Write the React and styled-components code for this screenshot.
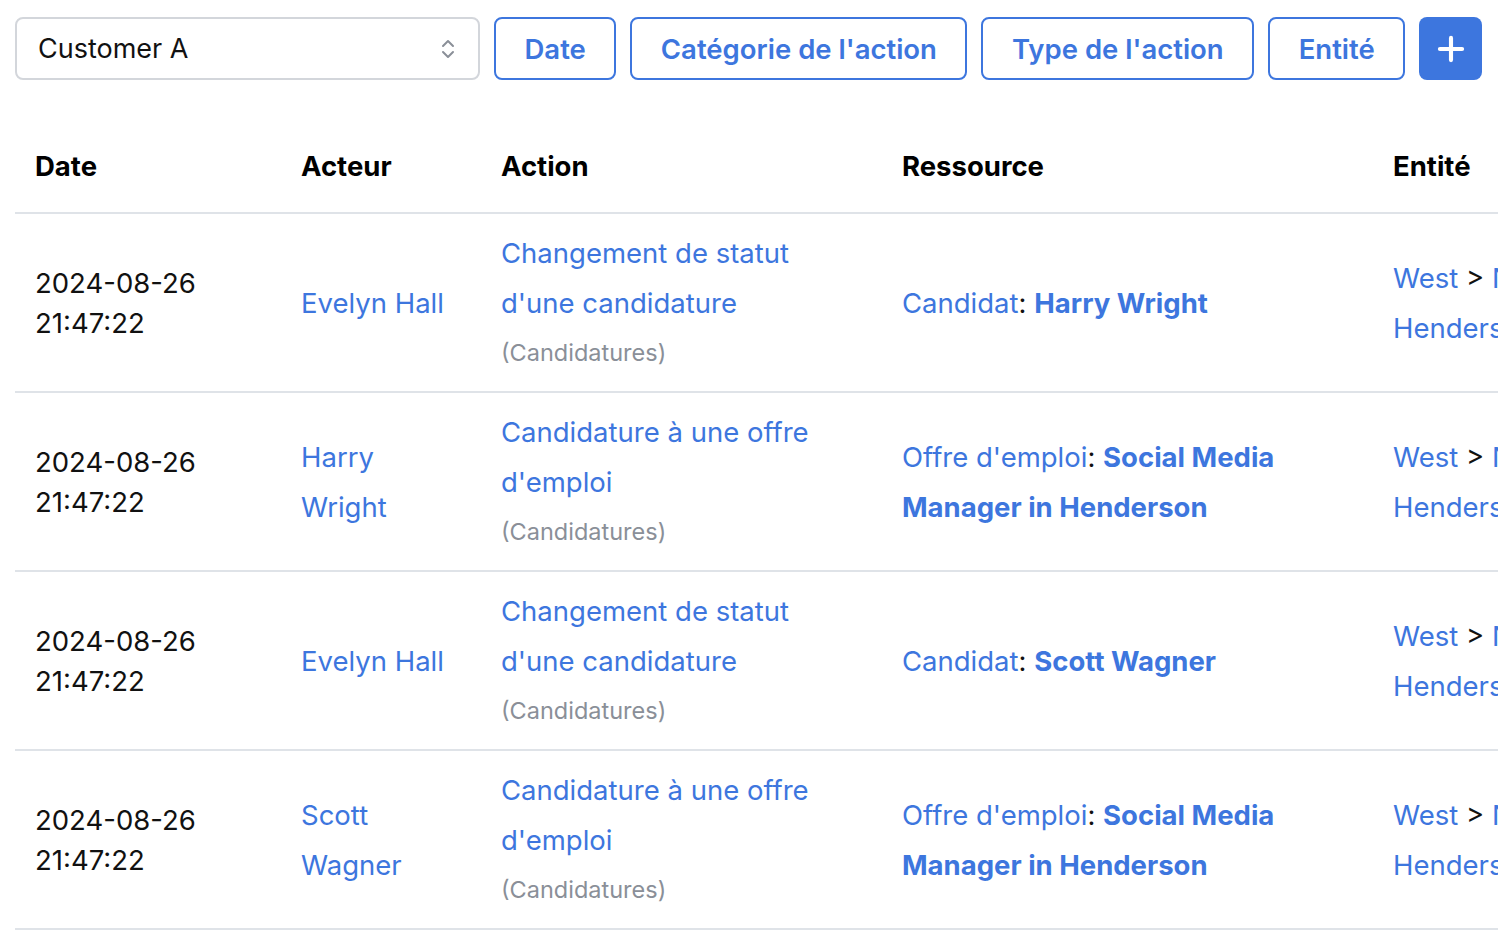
import styled, { createGlobalStyle } from "styled-components";
import { ChevronsUpDown, Plus } from "lucide-react";

const blue = "#3d76de";

const rows = [
    {
        date: "2024-08-26",
        time: "21:47:22",
        actor: "Evelyn Hall",
        action: "Changement de statut d'une candidature",
        category: "Candidatures",
        label: "Candidat",
        target: "Harry Wright",
    },
    {
        date: "2024-08-26",
        time: "21:47:22",
        actor: "Harry Wright",
        action: "Candidature à une offre d'emploi",
        category: "Candidatures",
        label: "Offre d'emploi",
        target: "Social Media Manager in Henderson",
    },
    {
        date: "2024-08-26",
        time: "21:47:22",
        actor: "Evelyn Hall",
        action: "Changement de statut d'une candidature",
        category: "Candidatures",
        label: "Candidat",
        target: "Scott Wagner",
    },
    {
        date: "2024-08-26",
        time: "21:47:22",
        actor: "Scott Wagner",
        action: "Candidature à une offre d'emploi",
        category: "Candidatures",
        label: "Offre d'emploi",
        target: "Social Media Manager in Henderson",
    },
];

const filters = ["Date", "Catégorie de l'action", "Type de l'action", "Entité"];

export default function App() {
    return (
        <>
            <GlobalStyle />
            <Page>
                <Toolbar>
                    <Select>
                        <span>Customer A</span>
                        <ChevronsUpDown size={24} strokeWidth={2} color="#8a8f98" />
                    </Select>
                    {filters.map((f) => (
                        <FilterButton key={f}>{f}</FilterButton>
                    ))}
                    <AddButton>
                        <Plus size={38} strokeWidth={2.6} color="#fff" />
                    </AddButton>
                </Toolbar>

                <Table>
                    <colgroup>
                        <col style={{ width: 266 }} />
                        <col style={{ width: 200 }} />
                        <col style={{ width: 401 }} />
                        <col style={{ width: 491 }} />
                        <col style={{ width: 300 }} />
                    </colgroup>
                    <thead>
                    <tr>
                        <Th>Date</Th>
                        <Th>Acteur</Th>
                        <Th>Action</Th>
                        <Th>Ressource</Th>
                        <Th>Entité</Th>
                    </tr>
                    </thead>
                    <tbody>
                    {rows.map((r, i) => (
                        <tr key={i}>
                            <Td>
                                <DateText>
                                    {r.date}
                                    <br />
                                    {r.time}
                                </DateText>
                            </Td>
                            <Td>
                                <Actor>{r.actor}</Actor>
                            </Td>
                            <Td>
                                <ActionText>{r.action}</ActionText>
                                <Category>({r.category})</Category>
                            </Td>
                            <Td>
                                <Resource>
                                    {r.label}
                                    <Sep>: </Sep>
                                    <strong>{r.target}</strong>
                                </Resource>
                            </Td>
                            <Td>
                                <Entity>
                                    West <Sep>&gt;</Sep> Nevada <Sep>&gt;</Sep> Henderson
                                </Entity>
                            </Td>
                        </tr>
                    ))}
                    </tbody>
                </Table>
            </Page>
        </>
    );
}

const GlobalStyle = createGlobalStyle`
    body {
        margin: 0;
        background: #fff;
        font-family: Inter, Roboto, "Liberation Sans", sans-serif;
        color: #111;
        overflow: hidden;
    }
`;

const Page = styled.div`
    padding: 17px 15px;
    width: 1468px;
    overflow: hidden;
`;

const Toolbar = styled.div`
    display: flex;
    gap: 14px;
    height: 63px;
`;

const Select = styled.div`
    width: 465px;
    box-sizing: border-box;
    border: 2px solid #d3d6db;
    border-radius: 8px;
    display: flex;
    align-items: center;
    justify-content: space-between;
    padding: 0 18px 0 21px;
    font-size: 27px;
    color: #111;
`;

const FilterButton = styled.button`
    box-sizing: border-box;
    height: 63px;
    padding: 0 28.5px;
    border: 2px solid ${blue};
    border-radius: 8px;
    background: #fff;
    color: ${blue};
    font-family: inherit;
    font-size: 27.5px;
    font-weight: 600;
`;

const AddButton = styled.button`
    width: 63px;
    height: 63px;
    border: none;
    border-radius: 8px;
    background: ${blue};
    display: flex;
    align-items: center;
    justify-content: center;
    padding: 0;
`;

const Table = styled.table`
    margin-top: 40px;
    width: 1658px;
    table-layout: fixed;
    border-collapse: collapse;
`;

const Th = styled.th`
    height: 92px;
    padding: 0 20px;
    text-align: left;
    font-size: 27.5px;
    font-weight: 700;
    color: #000;
    border-bottom: 2px solid #dfe3e8;
`;

const Td = styled.td`
    padding: 14px 20px 13px;
    vertical-align: middle;
    border-bottom: 2px solid #dfe3e8;
    font-size: 27.5px;
`;

const DateText = styled.div`
    line-height: 40px;
    color: #111;
`;

const Actor = styled.div`
    line-height: 50px;
    color: ${blue};
    max-width: 150px;
`;

const ActionText = styled.div`
    line-height: 50px;
    color: ${blue};
    max-width: 330px;
`;

const Category = styled.div`
    line-height: 50px;
    font-size: 23.5px;
    color: #8a8f98;
`;

const Resource = styled.div`
    line-height: 50px;
    color: ${blue};
    max-width: 420px;

    strong {
        font-weight: 700;
    }
`;

const Sep = styled.span`
    color: #111;
`;

const Entity = styled.div`
    line-height: 50px;
    color: ${blue};
    max-width: 250px;
`;
